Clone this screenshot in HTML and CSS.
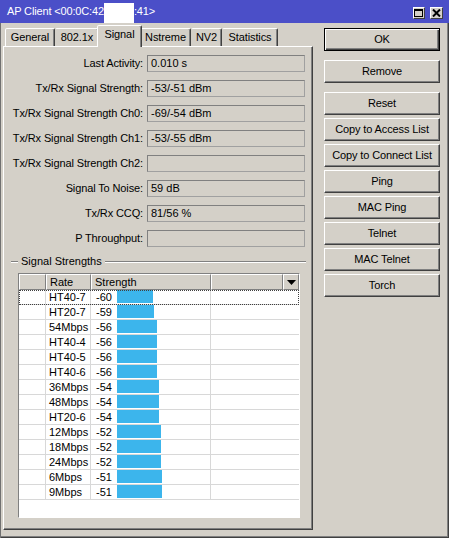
FILE: index.html
```html
<!DOCTYPE html>
<html>
<head>
<meta charset="utf-8">
<link rel="stylesheet" href="styles.css">
</head>
<body>
<div class="window">
  <div class="titlebar">
    <span class="title">AP Client &lt;00:0C:42</span><span class="redact"></span><span class="title">:41&gt;</span>
    <div class="tb-buttons">
      <span class="tb-btn"><svg width="10" height="9" viewBox="0 0 10 9"><rect x="0.5" y="0.5" width="8" height="7" fill="none" stroke="#000"/><rect x="0" y="0" width="9" height="2" fill="#000"/></svg></span>
      <span class="tb-btn"><svg width="9" height="8" viewBox="0 0 9 8"><path d="M1 0.5 L8 7.5 M8 0.5 L1 7.5" stroke="#000" stroke-width="2" fill="none"/></svg></span>
    </div>
  </div>
  <div class="body">
    <div class="left">
      <div class="tabs">
        <div class="tab t-general">General</div>
        <div class="tab t-8021x">802.1x</div>
        <div class="tab t-signal active">Signal</div>
        <div class="tab t-nstreme">Nstreme</div>
        <div class="tab t-nv2">NV2</div>
        <div class="tab t-stats">Statistics</div>
      </div>
      <div class="panel">
        <div class="row"><div class="label">Last Activity:</div><div class="value">0.010 s</div></div>
        <div class="row"><div class="label">Tx/Rx Signal Strength:</div><div class="value">-53/-51 dBm</div></div>
        <div class="row"><div class="label">Tx/Rx Signal Strength Ch0:</div><div class="value">-69/-54 dBm</div></div>
        <div class="row"><div class="label">Tx/Rx Signal Strength Ch1:</div><div class="value">-53/-55 dBm</div></div>
        <div class="row"><div class="label">Tx/Rx Signal Strength Ch2:</div><div class="value"></div></div>
        <div class="row"><div class="label">Signal To Noise:</div><div class="value">59 dB</div></div>
        <div class="row"><div class="label">Tx/Rx CCQ:</div><div class="value">81/56 %</div></div>
        <div class="row"><div class="label">P Throughput:</div><div class="value"></div></div>

        <div class="group"><span class="gline short"></span><span class="gtitle">Signal Strengths</span><span class="gline"></span></div>

        <div class="list">
          <div class="list-head">
            <div class="hc"></div>
            <div class="hc">Rate</div>
            <div class="hc">Strength</div>
            <div class="hc"></div>
            <div class="hc arrow"><svg width="9" height="5" viewBox="0 0 9 5"><polygon points="0,0 9,0 4.5,5" fill="#000"/></svg></div>
          </div>
          <div class="list-body">
            <div class="lrow focus"><div class="c"></div><div class="c">HT40-7</div><div class="c str"><span class="num">-60</span><span class="bar" style="width:36px"></span></div><div class="c"></div></div>
            <div class="lrow"><div class="c"></div><div class="c">HT20-7</div><div class="c str"><span class="num">-59</span><span class="bar" style="width:37px"></span></div><div class="c"></div></div>
            <div class="lrow"><div class="c"></div><div class="c">54Mbps</div><div class="c str"><span class="num">-56</span><span class="bar" style="width:40px"></span></div><div class="c"></div></div>
            <div class="lrow"><div class="c"></div><div class="c">HT40-4</div><div class="c str"><span class="num">-56</span><span class="bar" style="width:40px"></span></div><div class="c"></div></div>
            <div class="lrow"><div class="c"></div><div class="c">HT40-5</div><div class="c str"><span class="num">-56</span><span class="bar" style="width:40px"></span></div><div class="c"></div></div>
            <div class="lrow"><div class="c"></div><div class="c">HT40-6</div><div class="c str"><span class="num">-56</span><span class="bar" style="width:40px"></span></div><div class="c"></div></div>
            <div class="lrow"><div class="c"></div><div class="c">36Mbps</div><div class="c str"><span class="num">-54</span><span class="bar" style="width:42px"></span></div><div class="c"></div></div>
            <div class="lrow"><div class="c"></div><div class="c">48Mbps</div><div class="c str"><span class="num">-54</span><span class="bar" style="width:42px"></span></div><div class="c"></div></div>
            <div class="lrow"><div class="c"></div><div class="c">HT20-6</div><div class="c str"><span class="num">-54</span><span class="bar" style="width:42px"></span></div><div class="c"></div></div>
            <div class="lrow"><div class="c"></div><div class="c">12Mbps</div><div class="c str"><span class="num">-52</span><span class="bar" style="width:44px"></span></div><div class="c"></div></div>
            <div class="lrow"><div class="c"></div><div class="c">18Mbps</div><div class="c str"><span class="num">-52</span><span class="bar" style="width:44px"></span></div><div class="c"></div></div>
            <div class="lrow"><div class="c"></div><div class="c">24Mbps</div><div class="c str"><span class="num">-52</span><span class="bar" style="width:44px"></span></div><div class="c"></div></div>
            <div class="lrow"><div class="c"></div><div class="c">6Mbps</div><div class="c str"><span class="num">-51</span><span class="bar" style="width:45px"></span></div><div class="c"></div></div>
            <div class="lrow"><div class="c"></div><div class="c">9Mbps</div><div class="c str"><span class="num">-51</span><span class="bar" style="width:45px"></span></div><div class="c"></div></div>
          </div>
        </div>
      </div>
    </div>
    <div class="buttons">
      <div class="btn default">OK</div>
      <div class="btn gap-big">Remove</div>
      <div class="btn gap-big">Reset</div>
      <div class="btn">Copy to Access List</div>
      <div class="btn">Copy to Connect List</div>
      <div class="btn">Ping</div>
      <div class="btn">MAC Ping</div>
      <div class="btn">Telnet</div>
      <div class="btn">MAC Telnet</div>
      <div class="btn">Torch</div>
    </div>
  </div>
</div>
</body>
</html>
```

FILE: styles.css
```css
html, body {
  margin: 0;
  padding: 0;
  background: #d4d0c8;
}
body {
  font-family: "Liberation Sans", Arial, sans-serif;
  font-size: 11px;
  color: #000;
}
.window {
  width: 449px;
  height: 538px;
  background: #d4d0c8;
  box-sizing: border-box;
  box-shadow: inset 1px 0 #707070, inset -1px -1px #404040, inset -2px -2px #808080;
  overflow: hidden;
}
.titlebar {
  height: 23px;
  background: #4b4fc8;
  display: flex;
  align-items: flex-start;
  padding-left: 7px;
  box-sizing: border-box;
}
.title {
  color: #fff;
  font-size: 11px;
  line-height: 23px;
  letter-spacing: -0.15px;
  white-space: pre;
}
.redact {
  display: inline-block;
  width: 30px;
  height: 20px;
  margin-top: 3px;
  background: #fff;
}
.tb-buttons {
  margin-left: auto;
  margin-right: 6px;
  margin-top: 7px;
  display: flex;
  gap: 5px;
}
.tb-btn {
  width: 12px;
  height: 12px;
  box-sizing: border-box;
  background: #d4d0c8;
  border: 1px solid;
  border-color: #fff #404040 #404040 #fff;
  display: flex;
  align-items: center;
  justify-content: center;
}
.tb-btn + .tb-btn {
  width: 13px;
}
.body {
  display: flex;
  padding-left: 3px;
  padding-top: 2px;
}
.left {
  width: 310px;
}
.tabs {
  height: 21px;
  display: flex;
  align-items: flex-end;
  padding-left: 2px;
}
.tab {
  height: 18px;
  box-sizing: border-box;
  padding: 0;
  text-align: center;
  line-height: 17px;
  letter-spacing: -0.1px;
  border: 1px solid;
  border-bottom: none;
  border-color: #fff #404040 transparent #fff;
  box-shadow: inset -1px 0 #808080;
  border-radius: 2px 2px 0 0;
  background: #d4d0c8;
  white-space: nowrap;
}
.tab + .tab {
  border-left-color: transparent;
}
.t-general { width: 50px; }
.t-8021x { width: 44px; }
.t-signal { width: 41px; }
.t-nstreme { width: 51px; }
.t-nv2 { width: 31px; }
.t-stats { width: 56px; }
.tab.active {
  height: 22px;
  width: 45px;
  margin: 0 -2px -1px -2px;
  line-height: 16px;
  border-left-color: #fff;
  position: relative;
  z-index: 1;
}
.panel {
  width: 310px;
  height: 484px;
  box-sizing: border-box;
  border: 1px solid;
  border-color: #fff #404040 #404040 #fff;
  box-shadow: inset -1px -1px #808080;
  padding-top: 8px;
}
.row {
  display: flex;
  height: 17px;
  margin-bottom: 8px;
}
.label {
  width: 139px;
  text-align: right;
  line-height: 17px;
  letter-spacing: -0.12px;
  white-space: nowrap;
}
.value {
  margin-left: 4px;
  width: 158px;
  height: 17px;
  box-sizing: border-box;
  border: 1px solid;
  border-color: #808080 #a0a0a0 #a0a0a0 #808080;
  padding-left: 3px;
  line-height: 15px;
  white-space: nowrap;
}
.group {
  display: flex;
  align-items: center;
  height: 13px;
  margin-left: 7px;
  margin-right: 6px;
}
.gline {
  flex: 1;
  border-top: 1px solid #808080;
  border-bottom: 1px solid #fff;
  height: 0;
}
.gline.short {
  flex: 0 0 7px;
}
.gtitle {
  padding: 0 3px;
  line-height: 13px;
  white-space: nowrap;
}
.list {
  margin-left: 14px;
  margin-top: 5px;
  width: 282px;
  height: 245px;
  box-sizing: border-box;
  border: 1px solid;
  border-color: #808080 #fff #fff #808080;
  background: #fff;
}
.list-head {
  display: grid;
  grid-template-columns: 27px 45px 120px 72px 16px;
  height: 16px;
}
.hc {
  box-sizing: border-box;
  background: #d4d0c8;
  border-top: 1px solid #fff;
  border-left: 1px solid #fff;
  border-right: 1px solid #808080;
  border-bottom: 1px solid #808080;
  padding-left: 3px;
  line-height: 14px;
  white-space: nowrap;
}
.hc.arrow {
  padding: 0;
  display: flex;
  align-items: center;
  justify-content: center;
}
.lrow {
  display: grid;
  grid-template-columns: 27px 45px 120px 88px;
  height: 15px;
  box-sizing: border-box;
  border-bottom: 1px solid #d8d8d8;
}
.lrow.focus {
  outline: 1px dotted #404040;
  outline-offset: -1px;
}
.c {
  box-sizing: border-box;
  border-right: 1px solid #d8d8d8;
  padding-left: 3px;
  line-height: 14px;
  white-space: nowrap;
}
.c:last-child {
  border-right: none;
}
.c.str {
  display: flex;
  align-items: flex-start;
  padding-left: 5px;
}
.num {
  width: 21px;
  flex: none;
}
.bar {
  display: block;
  height: 13px;
  background: #3cb5ec;
}
.buttons {
  margin-left: 11px;
  margin-top: 3px;
  width: 116px;
  display: flex;
  flex-direction: column;
  gap: 3px;
}
.btn {
  width: 116px;
  height: 23px;
  box-sizing: border-box;
  border: 1px solid;
  border-color: #fff #404040 #404040 #fff;
  box-shadow: inset -1px -1px #808080;
  text-align: center;
  line-height: 21px;
  letter-spacing: -0.12px;
  white-space: nowrap;
}
.btn.default {
  border-color: #000;
  box-shadow: inset 1px 1px #fff, inset -1px -1px #404040, inset -2px -2px #808080;
}
.btn.gap-big {
  margin-top: 6px;
}
```
